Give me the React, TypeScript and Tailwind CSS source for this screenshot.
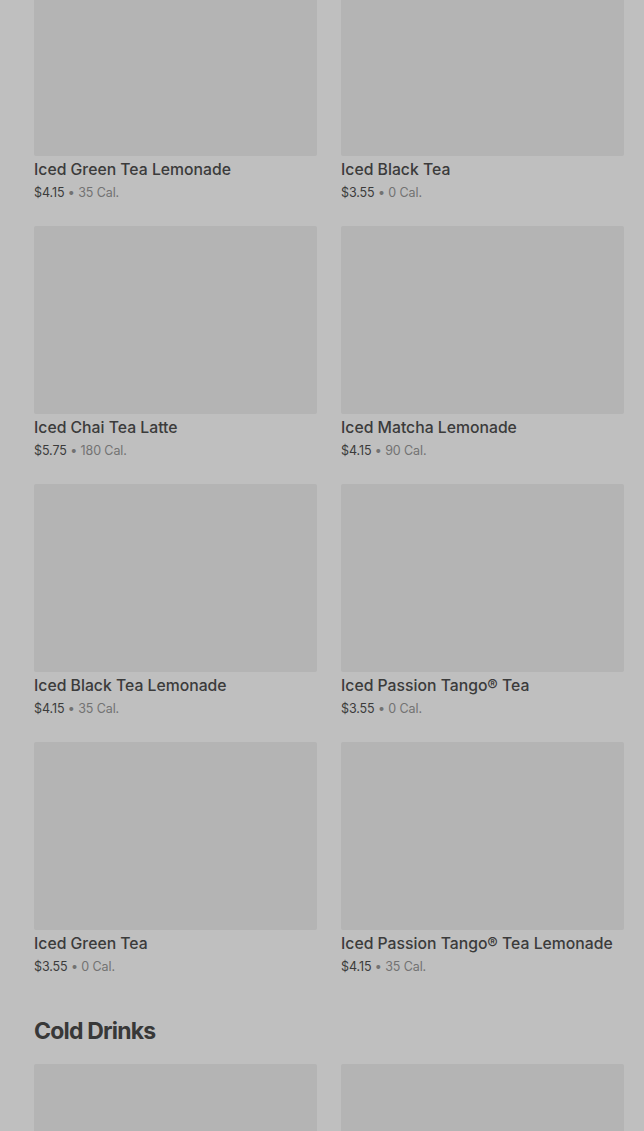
import React from "react";

type Item = { name: string; price: string; cal: string };

const rows: Item[][] = [
  [
    { name: "Iced Green Tea Lemonade", price: "$4.15", cal: "35 Cal." },
    { name: "Iced Black Tea", price: "$3.55", cal: "0 Cal." },
  ],
  [
    { name: "Iced Chai Tea Latte", price: "$5.75", cal: "180 Cal." },
    { name: "Iced Matcha Lemonade", price: "$4.15", cal: "90 Cal." },
  ],
  [
    { name: "Iced Black Tea Lemonade", price: "$4.15", cal: "35 Cal." },
    { name: "Iced Passion Tango® Tea", price: "$3.55", cal: "0 Cal." },
  ],
  [
    { name: "Iced Green Tea", price: "$3.55", cal: "0 Cal." },
    { name: "Iced Passion Tango® Tea Lemonade", price: "$4.15", cal: "35 Cal." },
  ],
];

function Card({ item }: { item: Item }) {
  return (
    <div className="flex flex-col">
      <div className="h-[188px] rounded-[2px] bg-[#b4b4b4]" />
      <div className="mt-[2px] text-[15.75px] leading-[24px] font-medium text-[#3b3b3b] tracking-[0px]">
        {item.name}
      </div>
      <div className="mt-[1px] text-[12.5px] leading-[20px] text-[#3b3b3b] tracking-[-0.1px]">
        {item.price}
        <span className="text-[#727272]"> • {item.cal}</span>
      </div>
    </div>
  );
}

export default function App() {
  return (
    <div
      className="h-[1131px] overflow-hidden bg-[#bfbfbf] pl-[34px] pr-[20px]"
      style={{ fontFamily: "Inter, 'Open Sans', sans-serif" }}
    >
      <div className="-mt-[32px] grid grid-cols-2 gap-x-[24px] gap-y-[23px]">
        {rows.flat().map((it, i) => (
          <Card key={i} item={it} />
        ))}
      </div>
      <h2 className="mt-[38px] mb-[17px] text-[23px] leading-[32px] font-bold tracking-[-0.8px] text-[#383838]">
        Cold Drinks
      </h2>
      <div className="grid grid-cols-2 gap-x-[24px]">
        <div className="h-[188px] rounded-[2px] bg-[#b4b4b4]" />
        <div className="h-[188px] rounded-[2px] bg-[#b4b4b4]" />
      </div>
    </div>
  );
}
